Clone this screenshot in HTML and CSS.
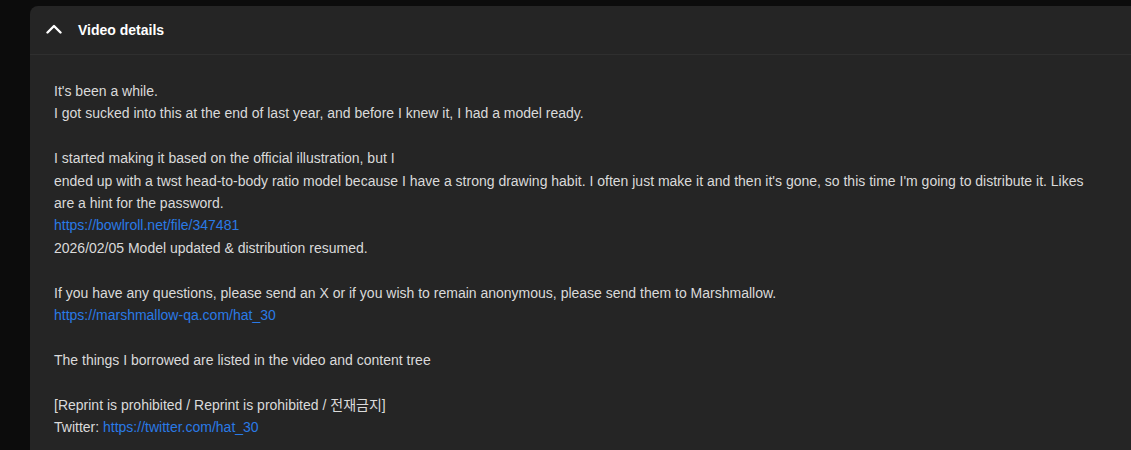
FILE: index.html
```html
<!DOCTYPE html>
<html lang="en">
<head>
<meta charset="utf-8">
<title>Video details</title>
<link rel="stylesheet" href="styles.css">
</head>
<body>
<div class="page">
  <section class="card">
    <header class="card-head">
      <svg class="chev" width="16" height="10" viewBox="0 0 16 10" aria-hidden="true"><path d="M1.5 8.5 L8 2 L14.5 8.5" fill="none" stroke="#ffffff" stroke-width="2.4" stroke-linecap="round" stroke-linejoin="round"/></svg>
      <h2 class="title">Video details</h2>
    </header>
    <div class="card-body">
      <p>It's been a while.<br>I got sucked into this at the end of last year, and before I knew it, I had a model ready.</p>
      <p>I started making it based on the official illustration, but I<br>ended up with a twst head-to-body ratio model because I have a strong drawing habit. I often just make it and then it's gone, so this time I'm going to distribute it. Likes are a hint for the password.<br><a href="#">https://bowlroll.net/file/347481</a><br>2026/02/05 Model updated &amp; distribution resumed.</p>
      <p>If you have any questions, please send an X or if you wish to remain anonymous, please send them to Marshmallow.<br><a href="#">https://marshmallow-qa.com/hat_30</a></p>
      <p>The things I borrowed are listed in the video and content tree</p>
      <p>[Reprint is prohibited / Reprint is prohibited / 전재금지]<br>Twitter: <a href="#">https://twitter.com/hat_30</a></p>
    </div>
  </section>
</div>
</body>
</html>
```
FILE: styles.css
```css
html, body {
  margin: 0;
  padding: 0;
  background: #0c0c0c;
  height: 100%;
}
body {
  font-family: "Liberation Sans", Arial, "Noto Sans CJK KR", sans-serif;
  overflow: hidden;
}
.page {
  padding: 6px 0 0 30px;
}
.card {
  background: #252525;
  border-radius: 8px 0 0 0;
  min-height: 460px;
}
.card-head {
  display: flex;
  align-items: center;
  height: 48px;
  padding: 0 0 0 16px;
  border-bottom: 1px solid #2f2f2f;
}
.chev {
  display: block;
  margin-right: 16px;
  margin-top: -2px;
}
.title {
  margin: 0;
  font-size: 14px;
  font-weight: bold;
  color: #ffffff;
}
.card-body {
  padding: 25px 24px 0 24px;
  color: #dadada;
  font-size: 14px;
  line-height: 22.4px;
}
.card-body p {
  margin: 0 0 22.4px 0;
}
.card-body a {
  color: #2a7ae6;
  text-decoration: none;
}
```
